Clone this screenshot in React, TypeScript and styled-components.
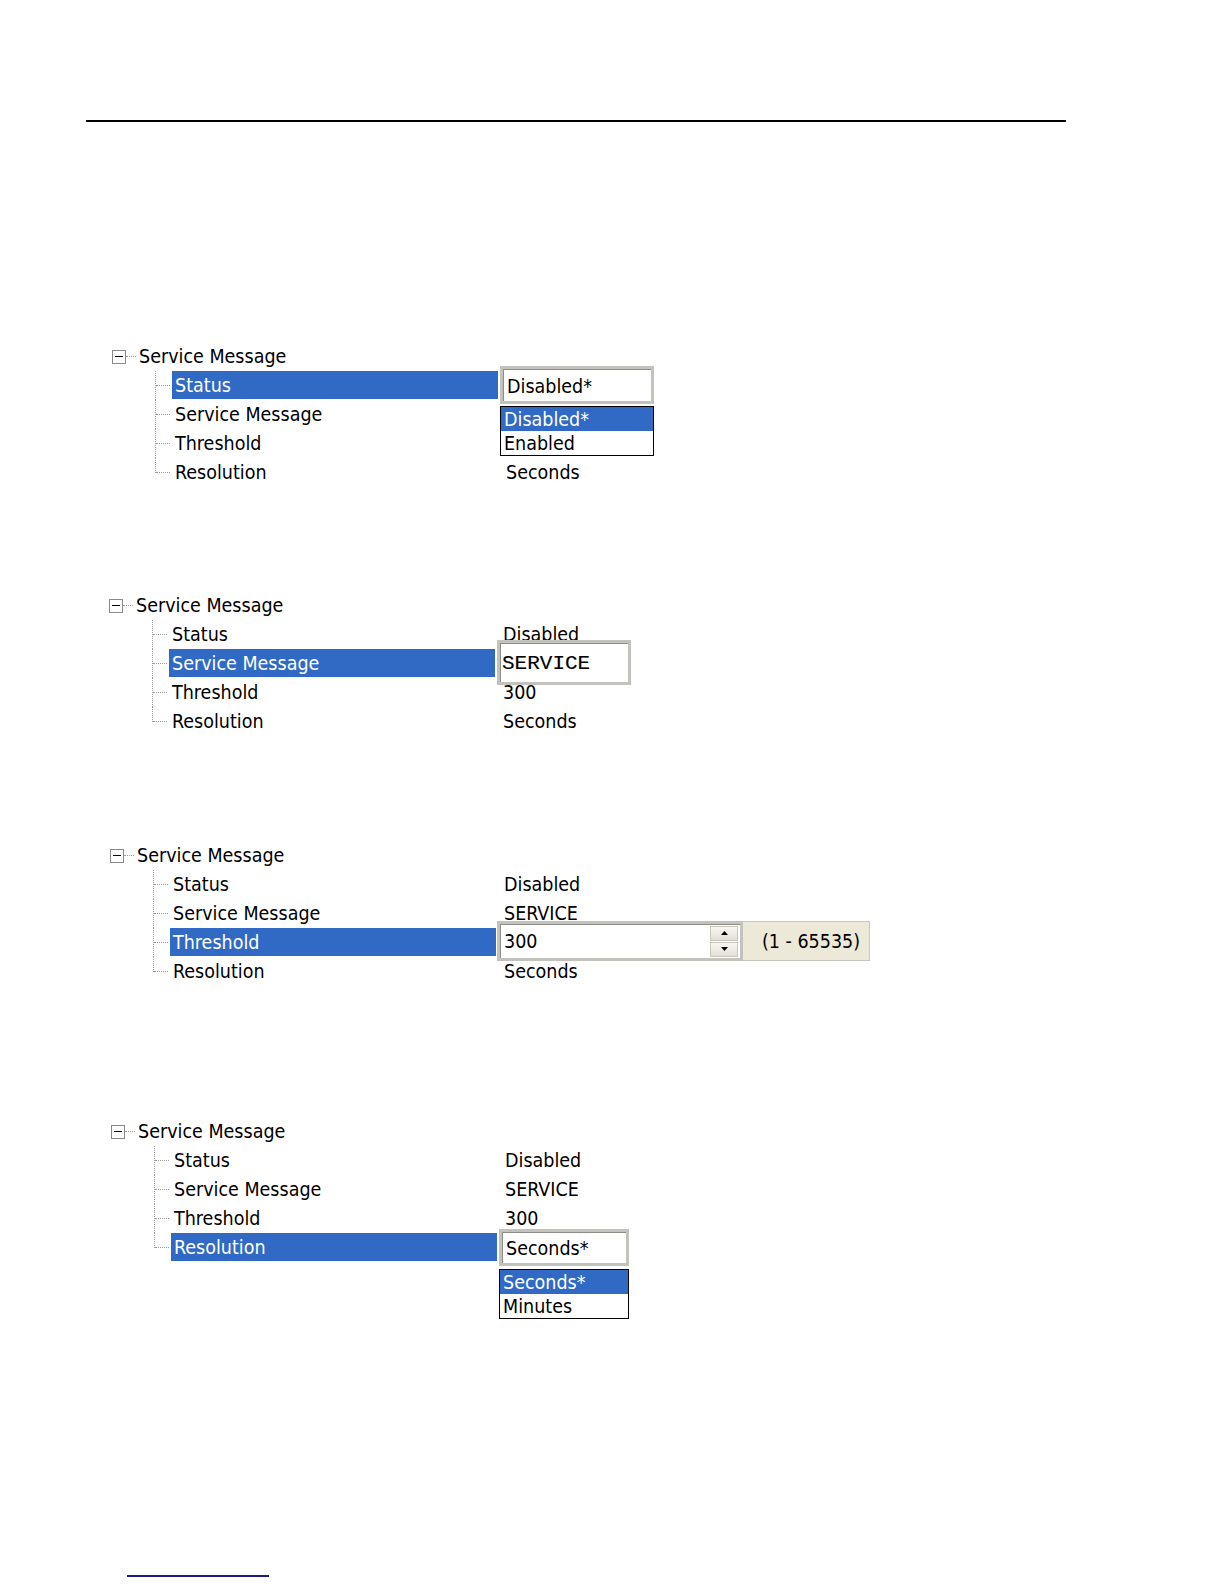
import React, { FC, ReactNode } from "react";
import styled, { createGlobalStyle } from "styled-components";

const GlobalStyle = createGlobalStyle`
  html, body {
    margin: 0;
    padding: 0;
    background: #ffffff;
  }
  body {
    font-family: "DejaVu Sans Condensed", "Liberation Sans", Arial, sans-serif;
    color: #000;
  }
`;

const XP_BLUE = "#316ac5";

const Page = styled.div`
  width: 1224px;
  height: 1584px;
  padding-top: 120px;
  box-sizing: border-box;
  overflow: hidden;
`;

const TopRule = styled.div`
  margin-left: 86px;
  width: 980px;
  height: 2px;
  background: #000;
`;

const FootRule = styled.div`
  margin-left: 127px;
  margin-top: 313px;
  width: 142px;
  height: 2px;
  background: #1c1c86;
`;

const TreeWrap = styled.div<{ $indent: number; $top: number }>`
  margin-left: ${(p) => p.$indent}px;
  margin-top: ${(p) => p.$top}px;
  font-size: 19.5px;
`;

const Header = styled.div`
  display: flex;
  align-items: center;
  height: 29px;
`;

const Toggle = styled.span`
  position: relative;
  width: 14px;
  height: 14px;
  margin-left: -1px;
  box-sizing: border-box;
  border: 1px solid #8a8a8a;
  background: #fff;
  &::after {
    content: "";
    position: absolute;
    left: 2px;
    top: 5px;
    width: 8px;
    height: 1.5px;
    background: #000;
  }
`;

const Dots = styled.span<{ $w: number }>`
  width: ${(p) => p.$w}px;
  border-top: 1px dotted #9a9a9a;
`;

const HeaderLabel = styled.span`
  margin-left: 3px;
  line-height: 29px;
`;

const Row = styled.div<{ $last?: boolean }>`
  position: relative;
  display: flex;
  height: 29px;
  margin-left: 42px;
  padding-left: 17px;
  &::before {
    content: "";
    position: absolute;
    left: 0;
    top: 0;
    height: ${(p) => (p.$last ? "15px" : "29px")};
    border-left: 1px dotted #9a9a9a;
  }
  &::after {
    content: "";
    position: absolute;
    left: 1px;
    top: 14px;
    width: 14px;
    border-top: 1px dotted #9a9a9a;
  }
`;

const LabelCell = styled.div<{ $selected?: boolean }>`
  width: 326px;
  height: 28px;
  line-height: 29px;
  padding-left: 3px;
  box-sizing: border-box;
  background: ${(p) => (p.$selected ? XP_BLUE : "transparent")};
  color: ${(p) => (p.$selected ? "#fff" : "#000")};
`;

const ValueCell = styled.div`
  position: relative;
  flex: 1;
  line-height: 29px;
  padding-left: 8px;
`;

const EditBox = styled.div<{ $left: number; $top: number; $w: number; $h: number; $mono?: boolean }>`
  position: absolute;
  left: ${(p) => p.$left}px;
  top: ${(p) => p.$top}px;
  width: ${(p) => p.$w}px;
  height: ${(p) => p.$h}px;
  box-sizing: border-box;
  display: flex;
  align-items: center;
  padding: 2px 0 0 ${(p) => (p.$mono ? 2 : 4)}px;
  background: #fff;
  border: 3px solid #c3c2bc;
  box-shadow: inset 1px 1px 0 #8d8c87;
  font-family: ${(p) =>
    p.$mono ? '"Liberation Mono", "Courier New", monospace' : "inherit"};
  font-size: ${(p) => (p.$mono ? "21px" : "19.5px")};
  ${(p) => (p.$mono ? "-webkit-text-stroke: 0.15px #000;" : "")}
  z-index: 2;
`;

const DropList = styled.div<{ $left: number; $top: number; $w: number }>`
  position: absolute;
  left: ${(p) => p.$left}px;
  top: ${(p) => p.$top}px;
  width: ${(p) => p.$w}px;
  box-sizing: border-box;
  border: 1px solid #000;
  background: #fff;
  z-index: 2;
`;

const DropItem = styled.div<{ $selected?: boolean }>`
  height: 24px;
  line-height: 25px;
  padding-left: 3px;
  background: ${(p) => (p.$selected ? XP_BLUE : "#fff")};
  color: ${(p) => (p.$selected ? "#fff" : "#000")};
`;

const Spinner = styled.div`
  position: absolute;
  left: 1px;
  top: -7px;
  display: flex;
  height: 40px;
  z-index: 2;
`;

const SpinField = styled.div`
  width: 246px;
  height: 40px;
  box-sizing: border-box;
  display: flex;
  align-items: center;
  justify-content: space-between;
  padding: 0 2px 0 4px;
  background: #fff;
  border: 3px solid #c3c2bc;
  box-shadow: inset 1px 1px 0 #8d8c87;
`;

const SpinButtons = styled.div`
  display: flex;
  flex-direction: column;
  gap: 1px;
  width: 28px;
`;

const SpinButton = styled.div`
  height: 15px;
  display: flex;
  align-items: center;
  justify-content: center;
  background: linear-gradient(#f7f6f1, #e2e0d6);
  border: 1px solid #c9c7bd;
  box-sizing: border-box;
`;

const RangeBox = styled.div`
  width: 127px;
  height: 40px;
  box-sizing: border-box;
  display: flex;
  align-items: center;
  justify-content: center;
  padding-left: 10px;
  background: #ece9d8;
  border-top: 1px solid #c9c7bd;
  border-bottom: 1px solid #c9c7bd;
  border-right: 1px solid #c9c7bd;
`;

const Arrow: FC<{ up?: boolean }> = ({ up }) => (
  <svg width="7" height="4" viewBox="0 0 7 4">
    <path d={up ? "M3.5 0 L7 4 L0 4 Z" : "M0 0 L7 0 L3.5 4 Z"} fill="#000" />
  </svg>
);

type TreeRow = {
  label: string;
  value: ReactNode;
  selected?: boolean;
  overlay?: ReactNode;
};

const Tree: FC<{ indent: number; top: number; rows: TreeRow[] }> = ({
  indent,
  top,
  rows,
}) => (
  <TreeWrap $indent={indent} $top={top}>
    <Header>
      <Toggle />
      <Dots $w={10} />
      <HeaderLabel>Service Message</HeaderLabel>
    </Header>
    {rows.map((r, i) => (
      <Row key={r.label} $last={i === rows.length - 1}>
        <LabelCell $selected={r.selected}>{r.label}</LabelCell>
        <ValueCell>
          {r.value}
          {r.overlay}
        </ValueCell>
      </Row>
    ))}
  </TreeWrap>
);

const App: FC = () => (
  <Page>
    <GlobalStyle />
    <TopRule />

    <Tree
      indent={113}
      top={220}
      rows={[
        {
          label: "Status",
          value: "",
          selected: true,
          overlay: (
            <>
              <EditBox $left={2} $top={-5} $w={154} $h={38}>
                Disabled*
              </EditBox>
              <DropList $left={2} $top={35} $w={154}>
                <DropItem $selected>Disabled*</DropItem>
                <DropItem>Enabled</DropItem>
              </DropList>
            </>
          ),
        },
        { label: "Service Message", value: "" },
        { label: "Threshold", value: "" },
        { label: "Resolution", value: "Seconds" },
      ]}
    />

    <Tree
      indent={110}
      top={104}
      rows={[
        { label: "Status", value: "Disabled" },
        {
          label: "Service Message",
          value: "",
          selected: true,
          overlay: (
            <EditBox $left={2} $top={-9} $w={134} $h={45} $mono>
              SERVICE
            </EditBox>
          ),
        },
        { label: "Threshold", value: "300" },
        { label: "Resolution", value: "Seconds" },
      ]}
    />

    <Tree
      indent={111}
      top={105}
      rows={[
        { label: "Status", value: "Disabled" },
        { label: "Service Message", value: "SERVICE" },
        {
          label: "Threshold",
          value: "",
          selected: true,
          overlay: (
            <Spinner>
              <SpinField>
                <span>300</span>
                <SpinButtons>
                  <SpinButton>
                    <Arrow up />
                  </SpinButton>
                  <SpinButton>
                    <Arrow />
                  </SpinButton>
                </SpinButtons>
              </SpinField>
              <RangeBox>(1 - 65535)</RangeBox>
            </Spinner>
          ),
        },
        { label: "Resolution", value: "Seconds" },
      ]}
    />

    <Tree
      indent={112}
      top={131}
      rows={[
        { label: "Status", value: "Disabled" },
        { label: "Service Message", value: "SERVICE" },
        { label: "Threshold", value: "300" },
        {
          label: "Resolution",
          value: "",
          selected: true,
          overlay: (
            <>
              <EditBox $left={2} $top={-4} $w={130} $h={37}>
                Seconds*
              </EditBox>
              <DropList $left={2} $top={36} $w={130}>
                <DropItem $selected>Seconds*</DropItem>
                <DropItem>Minutes</DropItem>
              </DropList>
            </>
          ),
        },
      ]}
    />

    <FootRule />
  </Page>
);

export default App;
